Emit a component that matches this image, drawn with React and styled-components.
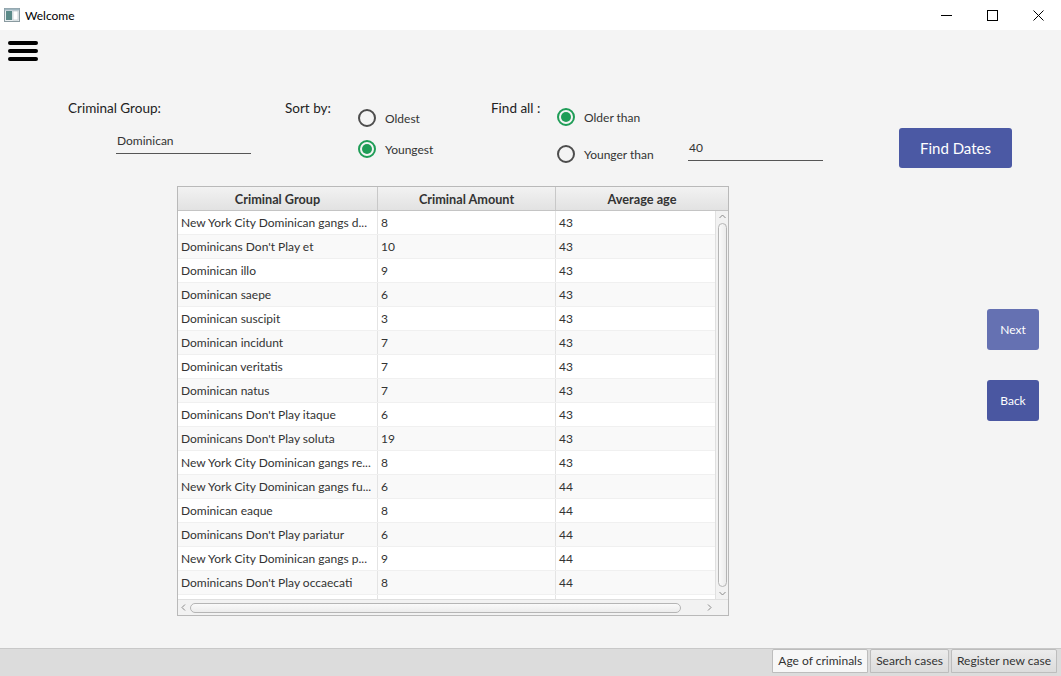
import React from "react";
import styled, { createGlobalStyle } from "styled-components";

const GlobalStyle = createGlobalStyle`
  html, body { margin: 0; padding: 0; background: #f4f4f4; }
  body { font-family: "Segoe UI", Lato, "Open Sans", sans-serif; color: #333; }
  * { box-sizing: border-box; }
`;

const rows = [
  ["New York City Dominican gangs d...", "8", "43"],
  ["Dominicans Don't Play et", "10", "43"],
  ["Dominican illo", "9", "43"],
  ["Dominican saepe", "6", "43"],
  ["Dominican suscipit", "3", "43"],
  ["Dominican incidunt", "7", "43"],
  ["Dominican veritatis", "7", "43"],
  ["Dominican natus", "7", "43"],
  ["Dominicans Don't Play itaque", "6", "43"],
  ["Dominicans Don't Play soluta", "19", "43"],
  ["New York City Dominican gangs re...", "8", "43"],
  ["New York City Dominican gangs fu...", "6", "44"],
  ["Dominican eaque", "8", "44"],
  ["Dominicans Don't Play pariatur", "6", "44"],
  ["New York City Dominican gangs p...", "9", "44"],
  ["Dominicans Don't Play occaecati", "8", "44"],
  ["", "", ""],
];

const Window = styled.div`
  width: 1061px;
  height: 676px;
  display: flex;
  flex-direction: column;
  overflow: hidden;
`;

const TitleBar = styled.div`
  height: 30px;
  background: #fff;
  display: flex;
  align-items: center;
`;

const AppIcon = styled.svg`
  margin-left: 4px;
  width: 16px;
  height: 14px;
`;

const Title = styled.span`
  margin-left: 5px;
  font-size: 12px;
  color: #000;
  flex: 1;
`;

const WinButton = styled.div`
  width: 46px;
  height: 30px;
  display: flex;
  align-items: center;
  justify-content: center;
`;

const Content = styled.div`
  flex: 1;
  background: #f4f4f4;
  display: flex;
  flex-direction: column;
`;

const Hamburger = styled.div`
  margin: 11px 0 0 8px;
  width: 30px;
  display: flex;
  flex-direction: column;
  gap: 4px;
`;

const Bar = styled.span`
  display: block;
  height: 4px;
  border-radius: 2px;
  background: #000;
`;

const Controls = styled.div`
  margin-top: 39px;
  padding-left: 68px;
  display: flex;
  align-items: flex-start;
`;

const Group = styled.div`
  width: ${(p) => p.$w}px;
  display: flex;
  flex-direction: ${(p) => (p.$col ? "column" : "row")};
  align-items: flex-start;
`;

const Label = styled.div`
  font-size: 13.5px;
  line-height: 16px;
  color: #222;
  width: ${(p) => (p.$w ? `${p.$w}px` : "auto")};
  flex-shrink: 0;
`;

const Field = styled.div`
  margin-top: ${(p) => p.$top || 0}px;
  margin-left: ${(p) => p.$left || 0}px;
  width: 135px;
  padding: 0 1px 4px;
  border-bottom: 1px solid #555;
  font-size: 12px;
  line-height: 16px;
  color: #333;
`;

const RadioList = styled.div`
  margin-top: ${(p) => p.$top}px;
  width: ${(p) => p.$w}px;
  display: flex;
  flex-direction: column;
  gap: ${(p) => p.$gap}px;
  flex-shrink: 0;
`;

const RadioRow = styled.div`
  display: flex;
  align-items: center;
  height: 18px;
  gap: 9px;
  font-size: 12px;
  color: #333;
`;

const Circle = styled.span`
  width: 18px;
  height: 18px;
  border-radius: 50%;
  border: 2px solid ${(p) => (p.$on ? "#1f9d57" : "#4d4d4d")};
  display: flex;
  align-items: center;
  justify-content: center;
  background: #f4f4f4;
  &::after {
    content: "";
    width: 10px;
    height: 10px;
    border-radius: 50%;
    background: ${(p) => (p.$on ? "#1f9d57" : "transparent")};
  }
`;

const Button = styled.button`
  border: none;
  border-radius: 3px;
  background: ${(p) => p.$bg || "#4a58a3"};
  color: #fff;
  font-family: inherit;
  font-size: ${(p) => p.$fs || 12}px;
  width: ${(p) => p.$w}px;
  height: ${(p) => p.$h}px;
  margin-top: ${(p) => p.$top || 0}px;
  margin-left: ${(p) => p.$left || 0}px;
  padding: 0;
  cursor: pointer;
`;

const Body = styled.div`
  margin-top: 18px;
  padding-left: 177px;
  display: flex;
  align-items: flex-start;
`;

const Table = styled.div`
  width: 552px;
  height: 430px;
  border: 1px solid #b9b9b9;
  background: #fff;
  display: flex;
  flex-direction: column;
`;

const HeaderRow = styled.div`
  display: flex;
  height: 24px;
  background: linear-gradient(#f2f2f2, #e2e2e2);
  border-bottom: 1px solid #c4c4c4;
`;

const HeadCell = styled.div`
  width: ${(p) => (p.$w ? `${p.$w}px` : "auto")};
  flex: ${(p) => (p.$w ? "none" : 1)};
  border-right: ${(p) => (p.$last ? "none" : "1px solid #c8c8c8")};
  font-size: 12.7px;
  font-weight: bold;
  color: #333;
  display: flex;
  align-items: center;
  justify-content: center;
`;

const Middle = styled.div`
  flex: 1;
  display: flex;
  overflow: hidden;
`;

const Rows = styled.div`
  flex: 1;
  overflow: hidden;
`;

const Row = styled.div`
  display: flex;
  height: 24px;
  background: ${(p) => (p.$odd ? "#f9f9f9" : "#fff")};
  border-bottom: 1px solid #f0f0f0;
`;

const Cell = styled.div`
  width: ${(p) => (p.$w ? `${p.$w}px` : "auto")};
  flex: ${(p) => (p.$w ? "none" : 1)};
  border-right: ${(p) => (p.$last ? "none" : "1px solid #e4e4e4")};
  padding: 0 0 1px 3px;
  font-size: 12px;
  color: #333;
  white-space: nowrap;
  overflow: hidden;
  display: flex;
  align-items: center;
`;

const VScroll = styled.div`
  width: 13px;
  background: #f2f2f2;
  border-left: 1px solid #e0e0e0;
  display: flex;
  flex-direction: column;
  align-items: center;
`;

const HScroll = styled.div`
  height: 16px;
  background: #f2f2f2;
  border-top: 1px solid #e0e0e0;
  display: flex;
  align-items: center;
`;

const Thumb = styled.div`
  background: linear-gradient(${(p) => (p.$h ? "#fafafa, #ececec" : "90deg, #fafafa, #ececec")});
  border: 1px solid #b5b5b5;
  border-radius: 5px;
  flex: 1;
  ${(p) => (p.$h ? "height: 10px;" : "width: 9px;")}
`;

const Arrow = styled.svg`
  flex-shrink: 0;
  width: ${(p) => (p.$h ? 12 : 13)}px;
  height: ${(p) => (p.$h ? 13 : 12)}px;
`;

const Gap = styled.div`
  width: ${(p) => p.$w}px;
  flex-shrink: 0;
`;

const Side = styled.div`
  margin-left: 258px;
  margin-top: 123px;
  display: flex;
  flex-direction: column;
  gap: 30px;
`;

const Spacer = styled.div`
  flex: 1;
`;

const TabBar = styled.div`
  height: 28px;
  background: #dcdcdc;
  border-top: 1px solid #c8c8c8;
  display: flex;
  justify-content: flex-end;
  align-items: flex-start;
  gap: 2px;
  padding: 0 4px 0 0;
`;

const Tab = styled.div`
  height: 24px;
  padding: 0 5px 1px;
  display: flex;
  align-items: center;
  font-size: 12px;
  color: #333;
  border: 1px solid #bdbdbd;
  border-radius: 2px 2px 0 0;
  background: ${(p) => (p.$active ? "#f7f7f7" : "linear-gradient(#ececec, #dcdcdc)")};
`;

const cols = [200, 178];

function App() {
  return (
    <Window>
      <GlobalStyle />
      <TitleBar>
        <AppIcon viewBox="0 0 16 14">
          <rect x="0.5" y="0.5" width="15" height="13" fill="#e8eef0" stroke="#8a9aa0" />
          <rect x="2" y="3" width="6" height="9" fill="#5a8a88" />
          <rect x="9" y="3" width="5" height="9" fill="#fff" stroke="#b0bcc0" strokeWidth="0.6" />
          <rect x="0.5" y="0.5" width="15" height="2" fill="#9fb6c0" />
        </AppIcon>
        <Title>Welcome</Title>
        <WinButton>
          <svg width="11" height="11" viewBox="0 0 11 11">
            <line x1="0" y1="5.5" x2="11" y2="5.5" stroke="#000" strokeWidth="1" />
          </svg>
        </WinButton>
        <WinButton>
          <svg width="11" height="11" viewBox="0 0 11 11">
            <rect x="0.5" y="0.5" width="10" height="10" fill="none" stroke="#000" strokeWidth="1" />
          </svg>
        </WinButton>
        <WinButton>
          <svg width="11" height="11" viewBox="0 0 11 11">
            <path d="M0.5 0.5 L10.5 10.5 M10.5 0.5 L0.5 10.5" stroke="#000" strokeWidth="1" />
          </svg>
        </WinButton>
      </TitleBar>
      <Content>
        <Hamburger>
          <Bar />
          <Bar />
          <Bar />
        </Hamburger>
        <Controls>
          <Group $w={217} $col>
            <Label>Criminal Group:</Label>
            <Field $top={17} $left={48}>Dominican</Field>
          </Group>
          <Group $w={206}>
            <Label $w={73}>Sort by:</Label>
            <RadioList $top={9} $gap={13} $w={120}>
              <RadioRow>
                <Circle />
                Oldest
              </RadioRow>
              <RadioRow>
                <Circle $on />
                Youngest
              </RadioRow>
            </RadioList>
          </Group>
          <Group>
            <Label $w={66}>Find all :</Label>
            <RadioList $top={8} $gap={19} $w={131}>
              <RadioRow>
                <Circle $on />
                Older than
              </RadioRow>
              <RadioRow>
                <Circle />
                Younger than
              </RadioRow>
            </RadioList>
            <Field $top={40}>40</Field>
            <Button $w={113} $h={40} $top={28} $left={76} $fs={15} $bg="#4b59a4">
              Find Dates
            </Button>
          </Group>
        </Controls>
        <Body>
          <Table>
            <HeaderRow>
              <HeadCell $w={200}>Criminal Group</HeadCell>
              <HeadCell $w={178}>Criminal Amount</HeadCell>
              <HeadCell $last>Average age</HeadCell>
            </HeaderRow>
            <Middle>
              <Rows>
                {rows.map((r, i) => (
                  <Row key={i} $odd={i % 2 === 1}>
                    <Cell $w={cols[0]}>{r[0]}</Cell>
                    <Cell $w={cols[1]}>{r[1]}</Cell>
                    <Cell $last>{r[2]}</Cell>
                  </Row>
                ))}
              </Rows>
              <VScroll>
                <Arrow viewBox="0 0 13 12">
                  <path d="M3.5 7 L6.5 4 L9.5 7" fill="none" stroke="#8a8a8a" strokeWidth="1" />
                </Arrow>
                <Thumb />
                <Arrow viewBox="0 0 13 12">
                  <path d="M3.5 5 L6.5 8 L9.5 5" fill="none" stroke="#8a8a8a" strokeWidth="1" />
                </Arrow>
              </VScroll>
            </Middle>
            <HScroll>
              <Arrow $h viewBox="0 0 12 13">
                <path d="M7 3.5 L4 6.5 L7 9.5" fill="none" stroke="#8a8a8a" strokeWidth="1" />
              </Arrow>
              <Thumb $h />
              <Gap $w={22} />
              <Arrow $h viewBox="0 0 12 13">
                <path d="M5 3.5 L8 6.5 L5 9.5" fill="none" stroke="#8a8a8a" strokeWidth="1" />
              </Arrow>
              <Gap $w={13} />
            </HScroll>
          </Table>
          <Side>
            <Button $w={52} $h={41} $bg="#6571b2">
              Next
            </Button>
            <Button $w={52} $h={41} $bg="#4a57a1">
              Back
            </Button>
          </Side>
        </Body>
        <Spacer />
        <TabBar>
          <Tab $active>Age of criminals</Tab>
          <Tab>Search cases</Tab>
          <Tab>Register new case</Tab>
        </TabBar>
      </Content>
    </Window>
  );
}

export default App;
